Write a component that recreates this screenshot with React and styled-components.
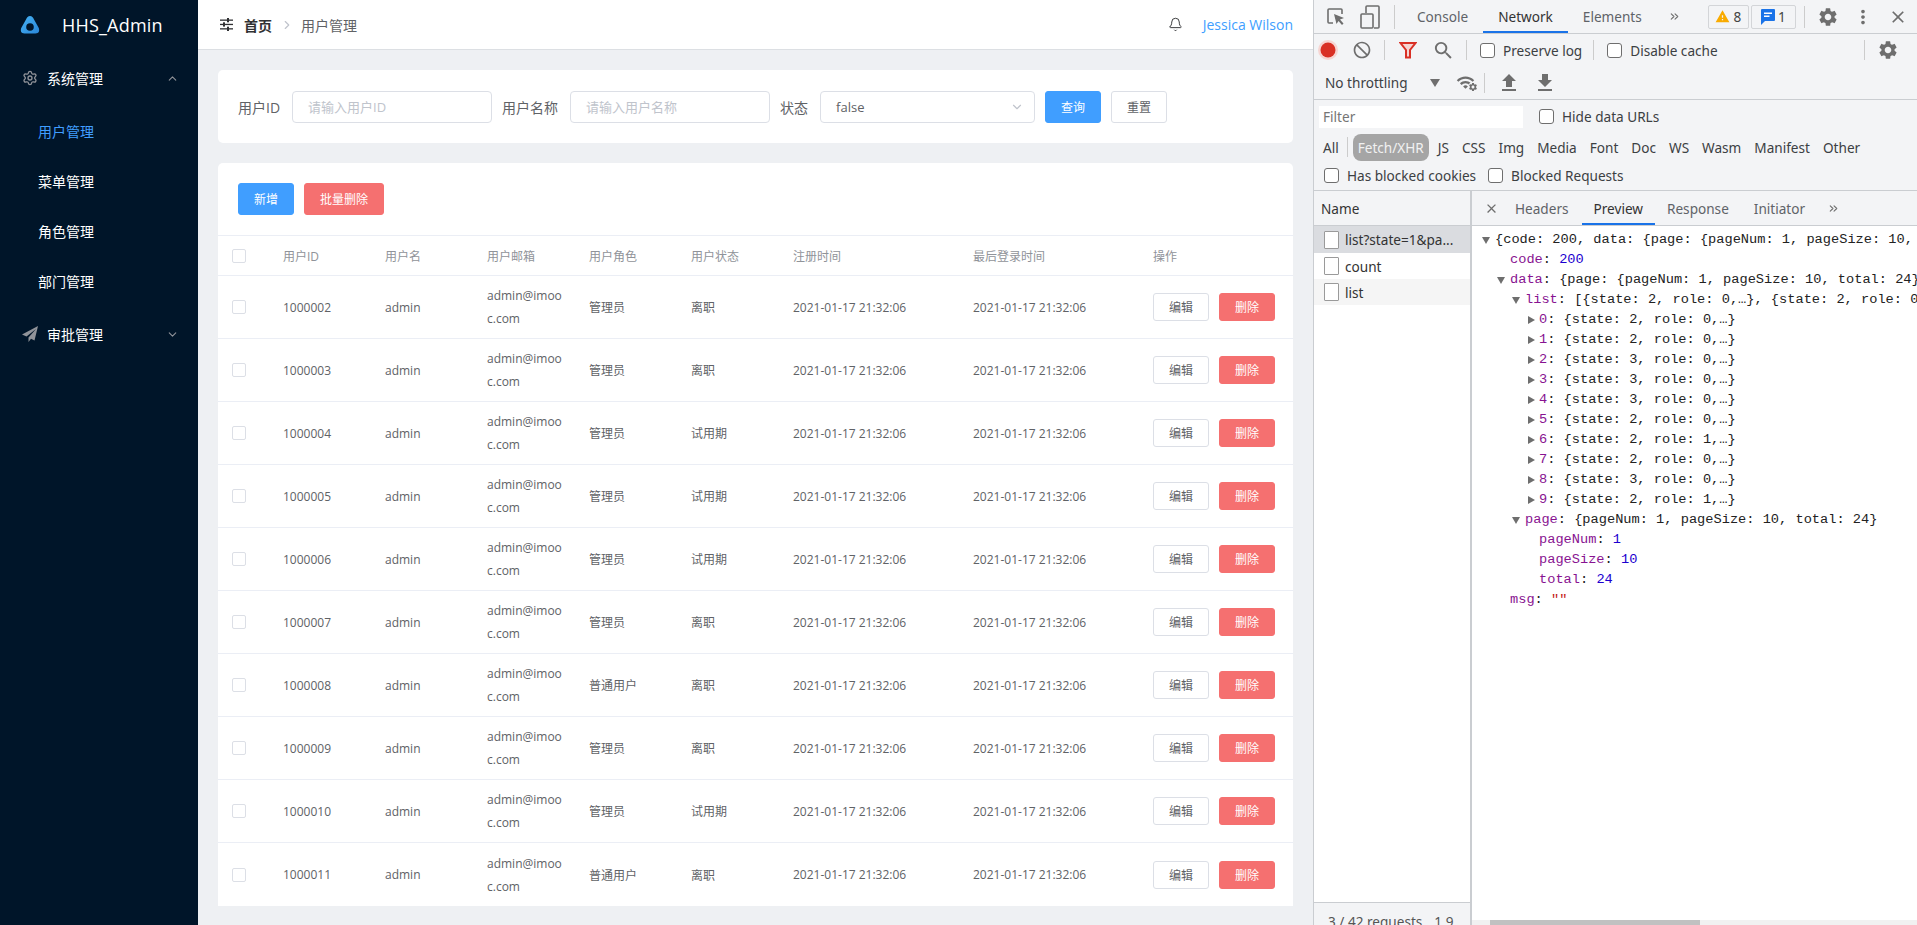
import React from 'react';
import styled, { createGlobalStyle } from 'styled-components';
import { ChevronDown, ChevronRight, ChevronUp, Settings, Bell, ChevronsRight } from 'lucide-react';
import { MdSettings, MdMoreVert, MdClose, MdBlock, MdSearch, MdFileUpload, MdFileDownload, MdWifi, MdWarning } from 'react-icons/md';

const GlobalStyle = createGlobalStyle`
  html, body { margin: 0; padding: 0; height: 100%; overflow: hidden; }
  body { font-family: "Open Sans", "Noto Sans CJK SC", sans-serif; }
  * { box-sizing: border-box; }
`;

const Page = styled.div`
  display: flex;
  width: 1917px;
  height: 925px;
  overflow: hidden;
`;

/* left menu */
const Sidebar = styled.aside`
  width: 198px;
  flex-shrink: 0;
  background: #001529;
  color: #fff;
`;
const Logo = styled.div`
  height: 50px;
  display: flex;
  align-items: center;
  padding-left: 20px;
  gap: 22px;
  font-size: 18px;
  letter-spacing: 0.2px;
`;
const MenuTitle = styled.div`
  height: 56px;
  display: flex;
  align-items: center;
  padding-left: 22px;
  font-size: 14px;
  color: #fff;
  svg:first-child { margin-right: 9px; color: #909399; }
  span { flex: 1; }
  svg:last-child { margin-right: 19px; color: #909399; }
`;
const MenuItem = styled.div`
  height: 50px;
  display: flex;
  align-items: center;
  padding-left: 38px;
  font-size: 14px;
  color: ${(p) => (p.$active ? '#409eff' : '#fff')};
`;

/* main area */
const Main = styled.main`
  width: 1115px;
  flex-shrink: 0;
  background: #eef0f3;
  display: flex;
  flex-direction: column;
`;
const Navbar = styled.header`
  height: 50px;
  flex-shrink: 0;
  background: #fff;
  border-bottom: 1px solid #dcdfe3;
  display: flex;
  align-items: center;
  padding: 0 20px 0 22px;
`;
const Crumb = styled.span`
  font-size: 14px;
  font-weight: ${(p) => (p.$bold ? 700 : 400)};
  color: ${(p) => (p.$bold ? '#303133' : '#606266')};
`;
const CrumbSep = styled(ChevronRight)`
  color: #c0c4cc;
  margin: 0 7px 0 8px;
`;
const NavRight = styled.div`
  margin-left: auto;
  display: flex;
  align-items: center;
  gap: 20px;
  font-size: 14px;
  color: #409eff;
`;
const Content = styled.div`
  padding: 20px;
  display: flex;
  flex-direction: column;
  gap: 20px;
`;
const Card = styled.section`
  background: #fff;
  border-radius: 5px 5px ${(p) => (p.$flat ? '0 0' : '5px 5px')};
`;
const QueryForm = styled(Card)`
  height: 73px;
  display: flex;
  align-items: center;
  padding-left: 20px;
`;
const Label = styled.label`
  font-size: 14px;
  color: #606266;
  margin-right: 12px;
`;
const Field = styled.div`
  width: ${(p) => p.$width}px;
  height: 32px;
  margin-right: 10px;
  border: 1px solid #dcdfe6;
  border-radius: 4px;
  display: flex;
  align-items: center;
  justify-content: space-between;
  padding: 0 10px 0 15px;
  font-size: 13px;
  color: ${(p) => (p.$placeholder ? '#c0c4cc' : '#606266')};
  svg { color: #c0c4cc; }
`;
const Button = styled.button`
  width: ${(p) => p.$width || 56}px;
  height: ${(p) => p.$height || 32}px;
  padding: 0;
  font-family: inherit;
  font-size: 12px;
  border-radius: 3px;
  border: 1px solid ${(p) => (p.$kind === 'primary' ? '#409eff' : p.$kind === 'danger' ? '#f56c6c' : '#dcdfe6')};
  background: ${(p) => (p.$kind === 'primary' ? '#409eff' : p.$kind === 'danger' ? '#f56c6c' : '#fff')};
  color: ${(p) => (p.$kind ? '#fff' : '#606266')};
  opacity: ${(p) => (p.$kind === 'danger' ? 0.97 : 1)};
`;
const Actions = styled.div`
  display: flex;
  gap: 10px;
`;
const Toolbar = styled(Actions)`
  height: 72px;
  padding: 20px;
`;
const Row = styled.div`
  display: grid;
  grid-template-columns: 55px repeat(5, 102px) 180px 180px 1fr;
  height: ${(p) => (p.$head ? 41 : 63)}px;
  border-top: ${(p) => (p.$head ? '1px solid #ebeef5' : 'none')};
  border-bottom: 1px solid #ebeef5;
  font-size: 12px;
  color: ${(p) => (p.$head ? '#909399' : '#606266')};
  &:last-child { border-bottom: none; }
`;
const Cell = styled.div`
  display: flex;
  align-items: center;
  padding: 0 10px;
`;
const MailCell = styled(Cell)`
  word-break: break-all;
  line-height: 23px;
`;
const Check = styled.span`
  width: 14px;
  height: 14px;
  margin-left: 4px;
  border: 1px solid #dcdfe6;
  border-radius: 2px;
  background: #fff;
`;

/* devtools */
const Devtools = styled.div`
  width: 604px;
  flex-shrink: 0;
  border-left: 1px solid #cacdd1;
  background: #f3f4f6;
  display: flex;
  flex-direction: column;
  font-family: "Noto Sans", sans-serif;
  font-size: 13.6px;
  color: #303942;
`;
const DevRow = styled.div`
  height: ${(p) => p.$h}px;
  flex-shrink: 0;
  display: flex;
  align-items: center;
  padding-left: ${(p) => p.$pl || 0}px;
  border-bottom: ${(p) => (p.$line ? '1px solid #cacdd1' : 'none')};
  white-space: nowrap;
  color: #3c4043;
`;
const Ico = styled.span`
  display: inline-flex;
  align-items: center;
  justify-content: center;
  flex-shrink: 0;
  margin-left: ${(p) => p.$ml || 0}px;
  color: ${(p) => p.$color || '#6e6e6e'};
`;
const Sep = styled.span`
  width: 1px;
  height: ${(p) => p.$h || 20}px;
  flex-shrink: 0;
  margin-left: ${(p) => p.$ml || 0}px;
  background: #ccc;
`;
const DevTab = styled.span`
  height: 100%;
  display: flex;
  align-items: center;
  flex-shrink: 0;
  margin-left: ${(p) => p.$ml || 0}px;
  padding: 2px ${(p) => p.$px || 0}px 0;
  border-bottom: 2px solid ${(p) => (p.$active ? '#1a73e8' : 'transparent')};
  color: ${(p) => (p.$active ? '#333' : '#5f6368')};
`;
const Badge = styled.span`
  height: 24px;
  width: ${(p) => p.$width}px;
  margin-left: ${(p) => p.$ml || 0}px;
  display: flex;
  align-items: center;
  justify-content: center;
  gap: 3px;
  flex-shrink: 0;
  border: 1px solid #d3d5d8;
  border-radius: 2px;
  color: #444;
`;
const DevCheck = styled.span`
  width: 15px;
  height: 15px;
  flex-shrink: 0;
  margin: 0 8px 0 ${(p) => p.$ml || 0}px;
  border: 1px solid #6e6e6e;
  border-radius: 3px;
  background: #fff;
`;
const Text = styled.span`
  margin-left: ${(p) => p.$ml || 0}px;
`;
const FilterInput = styled.div`
  width: 204px;
  height: 22px;
  background: #fff;
  padding-left: 4px;
  line-height: 22px;
  color: #757575;
`;
const TypeChip = styled.span`
  margin-left: ${(p) => p.$ml || 0}px;
  flex-shrink: 0;
  ${(p) => p.$active && `
    height: 27px;
    padding: 0 5px;
    display: flex;
    align-items: center;
    border-radius: 8px;
    background: #a5a5a5;
    color: #f1f1f1;
  `}
`;
const DevBody = styled.div`
  flex: 1;
  min-height: 0;
  display: flex;
`;
const NamePane = styled.div`
  width: 158px;
  flex-shrink: 0;
  background: #fff;
  border-right: 2px solid #cacdd1;
  display: flex;
  flex-direction: column;
`;
const NameHead = styled.div`
  height: 35px;
  flex-shrink: 0;
  padding-left: 7px;
  display: flex;
  align-items: center;
  border-bottom: 1px solid #cacdd1;
  background: #f3f4f6;
  color: #333;
`;
const NameRow = styled.div`
  height: ${(p) => p.$h || 26}px;
  flex-shrink: 0;
  display: flex;
  align-items: center;
  gap: 6px;
  padding-left: 10px;
  white-space: nowrap;
  color: #333;
  background: ${(p) => p.$bg || '#fff'};
`;
const FileIco = styled.span`
  width: 15px;
  height: 18px;
  flex-shrink: 0;
  background: #fff;
  border: 1px solid #9a9a9a;
  border-radius: 1px;
`;
const StatusBar = styled.div`
  height: 23px;
  margin-top: auto;
  flex-shrink: 0;
  padding: 10px 0 0 14px;
  display: flex;
  align-items: flex-start;
  gap: 12px;
  border-top: 1px solid #cacdd1;
  background: #f3f4f6;
  white-space: nowrap;
  overflow: hidden;
  line-height: 18px;
  color: #555;
`;
const PreviewPane = styled.div`
  flex: 1;
  min-width: 0;
  background: #fff;
  display: flex;
  flex-direction: column;
`;
const PreviewTabs = styled(DevRow)`
  background: #f3f4f6;
`;
const JsonView = styled.div`
  flex: 1;
  min-height: 0;
  padding-top: 4px;
  overflow: hidden;
  font-family: "Liberation Mono", monospace;
  font-size: 13.67px;
  line-height: 20px;
  color: #222;
`;
const JsonLine = styled.div`
  height: 20px;
  display: flex;
  align-items: center;
  padding-left: ${(p) => p.$indent}px;
  white-space: pre;
`;
const Arrow = styled.span`
  width: 0;
  height: 0;
  flex-shrink: 0;
  margin-right: ${(p) => (p.$open ? 5 : 4)}px;
  border-style: solid;
  border-color: transparent;
  ${(p) => p.$open
    ? 'border-width: 7px 4.5px 0; border-top-color: #6e6e6e;'
    : 'border-width: 4.5px 0 4.5px 7px; border-left-color: #6e6e6e;'}
`;
const Key = styled.span`
  color: #881391;
`;
const Num = styled.span`
  color: #1c00cf;
`;
const Str = styled.span`
  color: #c41a16;
`;
const ScrollTrack = styled.div`
  height: 5px;
  flex-shrink: 0;
  padding-left: 18px;
  background: #f1f1f1;
  div { width: 210px; height: 5px; background: #c1c1c1; }
`;

const LogoMark = () => (
  <svg width="20" height="20" viewBox="0 0 20 20">
    <defs>
      <linearGradient id="lg" x1="0" y1="0" x2="1" y2="1">
        <stop offset="0" stopColor="#46b4f5" />
        <stop offset="1" stopColor="#2a86d8" />
      </linearGradient>
    </defs>
    <path d="M10 1c2 0 3 1.500 4 3.500l4.500 8c1.500 3 .5 6-3 6h-11c-3.500 0-4.500-3-3-6l4.500-8C7 2.500 8 1 10 1z" fill="url(#lg)" />
    <circle cx="10" cy="12" r="3.800" fill="#001529" />
  </svg>
);

const PlaneIcon = () => (
  <svg width="16" height="16" viewBox="0 0 16 16" fill="#909399">
    <path d="M16 0 0 8.500l4.500 2L14 3 6.500 11.500V16l2.500-3.200 3.500 1.700z" />
  </svg>
);

const OperationIcon = () => (
  <svg width="13" height="13" viewBox="0 0 13 13" fill="#303133" style={{ marginRight: 11 }}>
    <rect x="0" y="1.500" width="13" height="1.300" />
    <rect x="7" y="0" width="2" height="4.300" />
    <rect x="0" y="5.800" width="13" height="1.300" />
    <rect x="3" y="4.300" width="2" height="4.300" />
    <rect x="0" y="10.200" width="13" height="1.300" />
    <rect x="7" y="8.700" width="2" height="4.300" />
  </svg>
);

const InspectIcon = () => (
  <svg width="18" height="20" viewBox="0 0 18 20" fill="none" stroke="#6e6e6e" strokeWidth="1.600">
    <path d="M6 16H2a1 1 0 0 1-1-1V3a1 1 0 0 1 1-1h12a1 1 0 0 1 1 1v4" />
    <path d="M7 7l10 4-4 1.500 3.500 4-1.500 1.500-3.500-4L9.500 17z" fill="#6e6e6e" stroke="none" />
  </svg>
);

const DeviceIcon = () => (
  <svg width="20" height="24" viewBox="0 0 20 24" fill="none" stroke="#6e6e6e" strokeWidth="1.600">
    <path d="M6 8V2a1 1 0 0 1 1-1h11a1 1 0 0 1 1 1v20a1 1 0 0 1-1 1h-4" />
    <rect x="1" y="9" width="12" height="14" rx="1" />
  </svg>
);

const FilterIcon = () => (
  <svg width="18" height="18" viewBox="0 0 18 18" fill="#f6d5d2" stroke="#d93025" strokeWidth="2">
    <path d="M1.500 2h15l-5.500 7v7.500H7V9z" />
  </svg>
);

const RecordIcon = () => (
  <svg width="20" height="20" viewBox="0 0 20 20">
    <circle cx="10" cy="10" r="10" fill="#f6d5d2" />
    <circle cx="10" cy="10" r="7.500" fill="#d93025" />
  </svg>
);

const MessageIcon = () => (
  <svg width="14" height="16" viewBox="0 0 14 16">
    <path d="M1 0h12a1 1 0 0 1 1 1v10a1 1 0 0 1-1 1H4l-4 4V1a1 1 0 0 1 1-1z" fill="#1a73e8" />
    <rect x="3" y="3.500" width="8" height="1.500" fill="#fff" />
    <rect x="3" y="6.500" width="5.500" height="1.500" fill="#fff" />
  </svg>
);

const users = [
  ['1000002', '管理员', '离职'],
  ['1000003', '管理员', '离职'],
  ['1000004', '管理员', '试用期'],
  ['1000005', '管理员', '试用期'],
  ['1000006', '管理员', '试用期'],
  ['1000007', '管理员', '离职'],
  ['1000008', '普通用户', '离职'],
  ['1000009', '管理员', '离职'],
  ['1000010', '管理员', '试用期'],
  ['1000011', '普通用户', '离职'],
];

const heads = ['用户ID', '用户名', '用户邮箱', '用户角色', '用户状态', '注册时间', '最后登录时间', '操作'];

const listItems = [
  [2, 0], [2, 0], [3, 0], [3, 0], [3, 0], [2, 0], [2, 1], [2, 0], [3, 0], [2, 1],
];

const types = [
  ['JS', 9], ['CSS', 13], ['Img', 13], ['Media', 13], ['Font', 13], ['Doc', 13], ['WS', 13], ['Wasm', 13], ['Manifest', 13], ['Other', 13],
];

const NetworkPanel = () => (
  <Devtools>
    <DevRow $h={34} $line>
      <Ico $ml={13}><InspectIcon /></Ico>
      <Ico $ml={15}><DeviceIcon /></Ico>
      <Sep $ml={14} $h={24} />
      <DevTab $ml={22}>Console</DevTab>
      <DevTab $ml={15} $px={15} $active>Network</DevTab>
      <DevTab $ml={15}>Elements</DevTab>
      <Ico $ml={26}><ChevronsRight size={13} /></Ico>
      <Badge $ml={27} $width={41}><MdWarning size={15} color="#f9ab00" />8</Badge>
      <Badge $ml={2} $width={45}><MessageIcon />1</Badge>
      <Sep $ml={8} $h={22} />
      <Ico $ml={12}><MdSettings size={22} /></Ico>
      <Ico $ml={13}><MdMoreVert size={22} /></Ico>
      <Ico $ml={14}><MdClose size={20} /></Ico>
    </DevRow>
    <DevRow $h={32} $pl={4}>
      <Ico $ml={0}><RecordIcon /></Ico>
      <Ico $ml={14}><MdBlock size={20} style={{ transform: 'scaleX(-1)' }} /></Ico>
      <Sep $ml={12} />
      <Ico $ml={14}><FilterIcon /></Ico>
      <Ico $ml={15}><MdSearch size={23} /></Ico>
      <Sep $ml={11} />
      <DevCheck $ml={13} />
      <Text>Preserve log</Text>
      <Sep $ml={11} />
      <DevCheck $ml={13} />
      <Text>Disable cache</Text>
      <Sep $ml={146} />
      <Ico $ml={12}><MdSettings size={22} /></Ico>
    </DevRow>
    <DevRow $h={34} $pl={11} $line>
      <Text>No throttling</Text>
      <Ico $ml={22} $color="#6e6e6e"><svg width="10" height="8" viewBox="0 0 10 8"><path d="M0 0h10L5 8z" fill="currentColor" /></svg></Ico>
      <Ico $ml={16} style={{ position: 'relative' }}>
        <MdWifi size={19} />
        <MdSettings size={10} style={{ position: 'absolute', right: -3, bottom: 0, background: '#f3f4f6', borderRadius: 5 }} />
      </Ico>
      <Sep $ml={9} />
      <Ico $ml={12}><MdFileUpload size={24} /></Ico>
      <Ico $ml={12}><MdFileDownload size={24} /></Ico>
    </DevRow>
    <DevRow $h={33} $pl={5}>
      <FilterInput>Filter</FilterInput>
      <DevCheck $ml={16} />
      <Text>Hide data URLs</Text>
    </DevRow>
    <DevRow $h={28} $pl={9}>
      <Text>All</Text>
      <Sep $ml={8} />
      <TypeChip $ml={5} $active>Fetch/XHR</TypeChip>
      {types.map(([name, gap]) => (
        <TypeChip key={name} $ml={gap}>{name}</TypeChip>
      ))}
    </DevRow>
    <DevRow $h={30} $pl={10} $line>
      <DevCheck />
      <Text>Has blocked cookies</Text>
      <DevCheck $ml={12} />
      <Text>Blocked Requests</Text>
    </DevRow>
    <DevBody>
      <NamePane>
        <NameHead>Name</NameHead>
        <NameRow $h={27} $bg="#dadce0"><FileIco />list?state=1&amp;pa...</NameRow>
        <NameRow><FileIco />count</NameRow>
        <NameRow $bg="#f5f5f5"><FileIco />list</NameRow>
        <StatusBar>
          <span>3 / 42 requests</span>
          <span>1.9</span>
        </StatusBar>
      </NamePane>
      <PreviewPane>
        <PreviewTabs $h={35} $line>
          <Ico $ml={12}><MdClose size={15} /></Ico>
          <DevTab $ml={16}>Headers</DevTab>
          <DevTab $ml={13} $px={12} $active>Preview</DevTab>
          <DevTab $ml={12}>Response</DevTab>
          <DevTab $ml={25}>Initiator</DevTab>
          <Ico $ml={22}><ChevronsRight size={13} /></Ico>
        </PreviewTabs>
        <JsonView>
          <JsonLine $indent={10}><Arrow $open />{'{code: 200, data: {page: {pageNum: 1, pageSize: 10, total: 24},…},…}'}</JsonLine>
          <JsonLine $indent={38}><Key>code</Key>: <Num>200</Num></JsonLine>
          <JsonLine $indent={25}><Arrow $open /><Key>data</Key>{': {page: {pageNum: 1, pageSize: 10, total: 24},…}'}</JsonLine>
          <JsonLine $indent={40}><Arrow $open /><Key>list</Key>{': [{state: 2, role: 0,…}, {state: 2, role: 0,…},…]'}</JsonLine>
          {listItems.map(([state, role], i) => (
            <JsonLine key={i} $indent={56}>
              <Arrow /><Key>{i}</Key>{`: {state: ${state}, role: ${role},…}`}
            </JsonLine>
          ))}
          <JsonLine $indent={40}><Arrow $open /><Key>page</Key>{': {pageNum: 1, pageSize: 10, total: 24}'}</JsonLine>
          <JsonLine $indent={67}><Key>pageNum</Key>: <Num>1</Num></JsonLine>
          <JsonLine $indent={67}><Key>pageSize</Key>: <Num>10</Num></JsonLine>
          <JsonLine $indent={67}><Key>total</Key>: <Num>24</Num></JsonLine>
          <JsonLine $indent={38}><Key>msg</Key>: <Str>""</Str></JsonLine>
        </JsonView>
        <ScrollTrack><div /></ScrollTrack>
      </PreviewPane>
    </DevBody>
  </Devtools>
);

export default function App() {
  return (
    <Page>
      <GlobalStyle />
      <Sidebar>
        <Logo><LogoMark />HHS_Admin</Logo>
        <MenuTitle><Settings size={16} /><span>系统管理</span><ChevronUp size={13} /></MenuTitle>
        <MenuItem $active>用户管理</MenuItem>
        <MenuItem>菜单管理</MenuItem>
        <MenuItem>角色管理</MenuItem>
        <MenuItem>部门管理</MenuItem>
        <MenuTitle><PlaneIcon /><span>审批管理</span><ChevronDown size={13} /></MenuTitle>
      </Sidebar>
      <Main>
        <Navbar>
          <OperationIcon />
          <Crumb $bold>首页</Crumb>
          <CrumbSep size={14} />
          <Crumb>用户管理</Crumb>
          <NavRight>
            <Bell size={15} color="#303133" strokeWidth={1.5} />
            Jessica Wilson
          </NavRight>
        </Navbar>
        <Content>
          <QueryForm>
            <Label>用户ID</Label>
            <Field $width={200} $placeholder>请输入用户ID</Field>
            <Label>用户名称</Label>
            <Field $width={200} $placeholder>请输入用户名称</Field>
            <Label>状态</Label>
            <Field $width={215}>false<ChevronDown size={14} /></Field>
            <Actions>
              <Button $kind="primary">查询</Button>
              <Button>重置</Button>
            </Actions>
          </QueryForm>
          <Card $flat>
            <Toolbar>
              <Button $kind="primary">新增</Button>
              <Button $kind="danger" $width={80}>批量删除</Button>
            </Toolbar>
            <Row $head>
              <Cell><Check /></Cell>
              {heads.map((h) => <Cell key={h}>{h}</Cell>)}
            </Row>
            {users.map(([id, role, state]) => (
              <Row key={id}>
                <Cell><Check /></Cell>
                <Cell>{id}</Cell>
                <Cell>admin</Cell>
                <MailCell>admin@imooc.com</MailCell>
                <Cell>{role}</Cell>
                <Cell>{state}</Cell>
                <Cell>2021-01-17 21:32:06</Cell>
                <Cell>2021-01-17 21:32:06</Cell>
                <Cell>
                  <Actions>
                    <Button $height={28}>编辑</Button>
                    <Button $height={28} $kind="danger">删除</Button>
                  </Actions>
                </Cell>
              </Row>
            ))}
          </Card>
        </Content>
      </Main>
      <NetworkPanel />
    </Page>
  );
}
